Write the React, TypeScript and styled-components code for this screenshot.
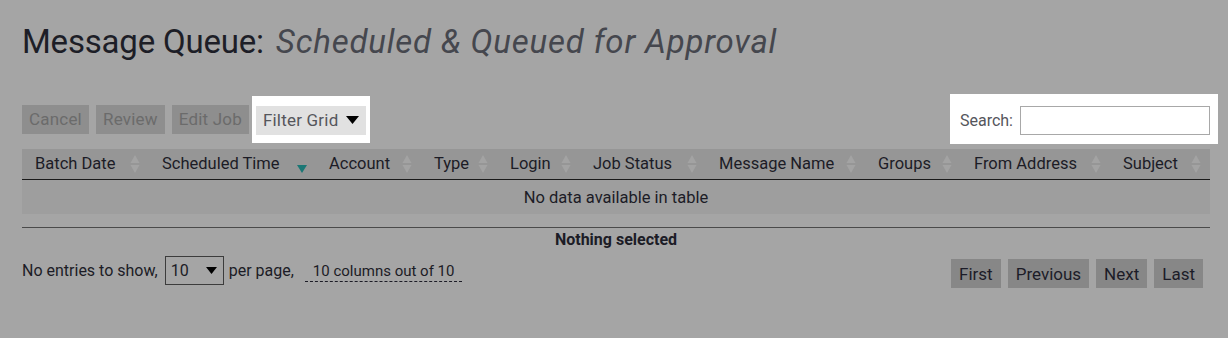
import React from 'react';
import styled, { createGlobalStyle } from 'styled-components';

const GlobalStyle = createGlobalStyle`
  html, body {
    margin: 0;
    padding: 0;
    background: #a5a5a5;
  }
  body {
    font-family: Roboto, "Liberation Sans", Arial, sans-serif;
    color: #1c1c26;
  }
  * { box-sizing: border-box; }
`;

const Page = styled.div`
  width: 1228px;
  height: 338px;
  padding: 23px 18px 0 22px;
`;

const Title = styled.h1`
  margin: 0;
  font-size: 33px;
  line-height: 38px;
  font-weight: 400;
  letter-spacing: -0.2px;
  color: #1d1e27;

  em {
    font-style: italic;
    color: #45474e;
    margin-left: 12px;
    letter-spacing: 0.8px;
  }
`;

const Toolbar = styled.div`
  display: flex;
  justify-content: space-between;
  align-items: center;
  margin-top: 33px;
  height: 50px;
  margin-right: -8px;
`;

const ButtonGroup = styled.div`
  display: flex;
  align-items: center;
  gap: 7px;
`;

const ActionButton = styled.button<{ $highlight?: boolean }>`
  height: 29px;
  padding: 0 7px;
  border: none;
  border-radius: 0;
  font-family: inherit;
  font-size: 17px;
  letter-spacing: 0.2px;
  background: ${({ $highlight }) => ($highlight ? '#e1e1e1' : '#8e8e8e')};
  color: ${({ $highlight }) => ($highlight ? '#55565c' : '#6b6b6b')};
  display: flex;
  align-items: center;
  gap: 8px;
`;

const Spotlight = styled.div<{ $pad: string; $pull?: number }>`
  background: #ffffff;
  padding: ${({ $pad }) => $pad};
  margin-left: ${({ $pull }) => ($pull ? `-${$pull}px` : '0')};
  display: flex;
  align-items: center;
`;

const SearchLabel = styled.label`
  display: flex;
  align-items: center;
  gap: 7px;
  font-size: 16px;
  color: #55565c;
`;

const SearchInput = styled.input`
  width: 190px;
  height: 29px;
  border: 1px solid #a8a8a8;
  background: #fff;
  font-family: inherit;
`;

const Table = styled.table`
  width: 1188px;
  margin-top: 5px;
  border-collapse: collapse;
  table-layout: fixed;
  font-size: 16.5px;
`;

const HeadCell = styled.th`
  height: 30px;
  padding: 0 8px 0 13px;
  background: #969696;
  border-bottom: 1px solid #1a1a1a;
  font-weight: 400;
  text-align: left;
  color: #1c1c26;
`;

const HeadInner = styled.div`
  display: flex;
  align-items: center;
  justify-content: space-between;
`;

const EmptyCell = styled.td`
  height: 35px;
  padding-top: 2px;
  background: #9e9e9e;
  text-align: center;
  color: #1c1c26;
`;

const Divider = styled.div`
  width: 1188px;
  margin-top: 13px;
  border-top: 1px solid #4a4a4a;
`;

const SelectedInfo = styled.div`
  width: 1188px;
  text-align: center;
  font-size: 16px;
  font-weight: 700;
  line-height: 22px;
  margin-top: 1px;
`;

const Footer = styled.div`
  display: flex;
  justify-content: space-between;
  align-items: flex-start;
  width: 1181px;
  margin-top: 5px;
`;

const Info = styled.div`
  display: flex;
  align-items: center;
  font-size: 16px;
  color: #1c1c26;
`;

const PageSelect = styled.div`
  width: 59px;
  height: 29px;
  margin: 0 5px 0 7px;
  border: 1px solid #3c3c3c;
  display: flex;
  align-items: center;
  justify-content: space-between;
  padding: 0 6px 0 5px;
  font-size: 16px;
`;

const ColumnsToggle = styled.span`
  margin-left: 11px;
  padding: 0 8px 1px;
  border-bottom: 1px dashed #1c1c26;
  font-size: 15px;
  margin-top: 3px;
`;

const Pager = styled.div`
  display: flex;
  gap: 7px;
  margin-top: 3px;
`;

const PageButton = styled.button`
  height: 29px;
  padding: 0 8px;
  border: none;
  border-radius: 0;
  background: #878787;
  color: #1c1c28;
  font-family: inherit;
  font-size: 17px;
`;

const Caret = ({ color = '#000', w = 13, h = 8 }: { color?: string; w?: number; h?: number }) => (
  <svg width={w} height={h} viewBox="0 0 13 8">
    <path d="M0 0 L13 0 L6.5 8 Z" fill={color} />
  </svg>
);

const SortIcon = ({ active }: { active?: boolean }) =>
  active ? (
    <svg width="12" height="20" viewBox="0 0 12 20">
      <path d="M1 11 L11 11 L6 19 Z" fill="#1b7775" />
    </svg>
  ) : (
    <svg width="12" height="20" viewBox="0 0 12 20">
      <path d="M1.5 9 L10.5 9 L6 1 Z" fill="#a3a3a3" />
      <path d="M1.5 11 L10.5 11 L6 19 Z" fill="#a3a3a3" />
    </svg>
  );

const columns: { label: string; width: number; active?: boolean }[] = [
  { label: 'Batch Date', width: 127 },
  { label: 'Scheduled Time', width: 167, active: true },
  { label: 'Account', width: 105 },
  { label: 'Type', width: 76 },
  { label: 'Login', width: 83 },
  { label: 'Job Status', width: 126 },
  { label: 'Message Name', width: 159 },
  { label: 'Groups', width: 96 },
  { label: 'From Address', width: 149 },
  { label: 'Subject', width: 100 },
];

export default function App() {
  return (
    <>
      <GlobalStyle />
      <Page>
        <Title>
          Message Queue:<em>Scheduled &amp; Queued for Approval</em>
        </Title>

        <Toolbar>
          <ButtonGroup>
            <ActionButton>Cancel</ActionButton>
            <ActionButton>Review</ActionButton>
            <ActionButton>Edit Job</ActionButton>
            <Spotlight $pad="10px 4px 8px" $pull={4}>
              <ActionButton $highlight>
                Filter Grid <Caret />
              </ActionButton>
            </Spotlight>
          </ButtonGroup>
          <Spotlight $pad="12px 8px 9px 10px">
            <SearchLabel>
              Search:
              <SearchInput type="text" />
            </SearchLabel>
          </Spotlight>
        </Toolbar>

        <Table>
          <colgroup>
            {columns.map((c) => (
              <col key={c.label} style={{ width: c.width }} />
            ))}
          </colgroup>
          <thead>
            <tr>
              {columns.map((c) => (
                <HeadCell key={c.label}>
                  <HeadInner>
                    {c.label}
                    <SortIcon active={c.active} />
                  </HeadInner>
                </HeadCell>
              ))}
            </tr>
          </thead>
          <tbody>
            <tr>
              <EmptyCell colSpan={columns.length}>No data available in table</EmptyCell>
            </tr>
          </tbody>
        </Table>

        <Divider />
        <SelectedInfo>Nothing selected</SelectedInfo>

        <Footer>
          <Info>
            No entries to show,
            <PageSelect>
              10 <Caret w={11} h={7} />
            </PageSelect>
            per page,
            <ColumnsToggle>10 columns out of 10</ColumnsToggle>
          </Info>
          <Pager>
            <PageButton>First</PageButton>
            <PageButton>Previous</PageButton>
            <PageButton>Next</PageButton>
            <PageButton>Last</PageButton>
          </Pager>
        </Footer>
      </Page>
    </>
  );
}
